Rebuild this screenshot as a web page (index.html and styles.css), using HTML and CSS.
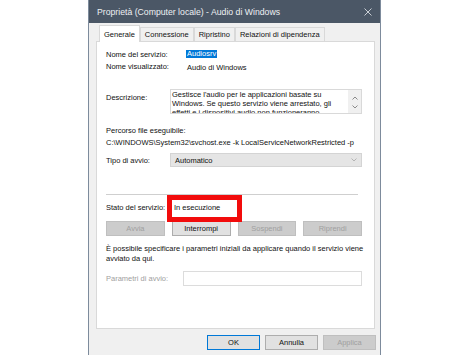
FILE: index.html
```html
<!DOCTYPE html>
<html lang="it">
<head>
    <meta charset="UTF-8">
    <meta name="viewport" content="width=device-width, initial-scale=1.0">
    <title>Proprietà - Audio di Windows</title>
    <link rel="stylesheet" href="styles.css">
</head>
<body>
    <div class="window">
        <div class="titlebar">
            <span class="title">Proprietà (Computer locale) - Audio di Windows</span>
            <svg class="close" width="8" height="8" viewBox="0 0 8 8">
                <path d="M0.5 0.5 L7.5 7.5 M7.5 0.5 L0.5 7.5" stroke="#c9ced4" stroke-width="1" fill="none"/>
            </svg>
        </div>

        <div class="client">
            <div class="tabs">
                <div class="tab active">Generale</div>
                <div class="tab">Connessione</div>
                <div class="tab">Ripristino</div>
                <div class="tab">Relazioni di dipendenza</div>
            </div>

            <div class="panel">
                <div class="row name-row">
                    <span class="label">Nome del servizio:</span>
                    <span class="selected-text">Audiosrv</span>
                </div>
                <div class="row name-row">
                    <span class="label">Nome visualizzato:</span>
                    <span class="display-name">Audio di Windows</span>
                </div>

                <div class="desc-row">
                    <span class="label desc-label">Descrizione:</span>
                    <div class="textarea">
                        <div class="textarea-text">Gestisce l'audio per le applicazioni basate su Windows. Se questo servizio viene arrestato, gli effetti e i dispositivi audio non funzioneranno correttamente.</div>
                        <div class="scrollbar">
                            <svg width="6" height="4" viewBox="0 0 6 4"><path d="M0.5 3.5 L3 1 L5.5 3.5" stroke="#8a8a8a" fill="none"/></svg>
                            <svg width="6" height="4" viewBox="0 0 6 4"><path d="M0.5 0.5 L3 3 L5.5 0.5" stroke="#8a8a8a" fill="none"/></svg>
                        </div>
                    </div>
                </div>

                <div class="row path-label">Percorso file eseguibile:</div>
                <div class="row">C:\WINDOWS\System32\svchost.exe -k LocalServiceNetworkRestricted -p</div>

                <div class="select-row">
                    <span class="label">Tipo di avvio:</span>
                    <div class="select">
                        <span>Automatico</span>
                        <svg width="6" height="4" viewBox="0 0 6 4"><path d="M0.5 0.5 L3 3 L5.5 0.5" stroke="#b4b4b4" fill="none"/></svg>
                    </div>
                </div>

                <div class="separator"></div>

                <div class="row status-row">
                    <span class="label">Stato del servizio:</span>
                    <span class="status">In esecuzione<span class="highlight-box"></span></span>
                </div>

                <div class="service-buttons">
                    <button class="btn disabled">Avvia</button>
                    <button class="btn">Interrompi</button>
                    <button class="btn disabled">Sospendi</button>
                    <button class="btn disabled">Riprendi</button>
                </div>

                <p class="info">È possibile specificare i parametri iniziali da applicare quando il servizio viene<br>avviato da qui.</p>

                <div class="params-row">
                    <span class="label muted">Parametri di avvio:</span>
                    <div class="input"></div>
                </div>
            </div>

            <div class="dialog-buttons">
                <button class="btn default">OK</button>
                <button class="btn">Annulla</button>
                <button class="btn disabled">Applica</button>
            </div>
        </div>
    </div>
</body>
</html>
```

FILE: styles.css
```css
* {
    margin: 0;
    padding: 0;
    box-sizing: border-box;
}

html, body {
    height: 100%;
    overflow: hidden;
}

body {
    font-family: 'Liberation Sans', Arial, sans-serif;
    font-size: 7.5px;
    color: #111;
    background: #fff;
}

.window {
    margin-left: 88px;
    width: 293px;
    height: 355px;
    overflow: hidden;
    border-left: 1px solid #7d8b9c;
    border-right: 1px solid #7d8b9c;
    background: #f0f0f0;
}

.titlebar {
    height: 23px;
    background: #4b5766;
    display: flex;
    align-items: center;
    justify-content: space-between;
    padding: 0 8px 0 8px;
}

.title {
    color: #eef0f3;
    font-size: 8.7px;
}

.close {
    display: block;
    margin-top: 1px;
}

.client {
    padding-top: 2px;
}

/* tabs */
.tabs {
    display: flex;
    align-items: flex-end;
    height: 16px;
    margin-left: 10px;
}

.tab {
    height: 14px;
    padding: 0 4px;
    display: flex;
    align-items: center;
    border: 1px solid #d9d9d9;
    border-bottom: none;
    background: #f0f0f0;
}

.tab.active {
    height: 17px;
    margin-bottom: -1px;
    background: #fff;
    position: relative;
    z-index: 1;
}

.panel {
    margin-left: 7px;
    width: 279px;
    height: 288px;
    background: #fff;
    border: 1px solid #d9d9d9;
    padding: 6px 12px 0 9px;
}

.row {
    height: 12px;
    display: flex;
    align-items: center;
    white-space: nowrap;
}

.name-row .label {
    width: 81px;
}

.selected-text {
    background: #0078d7;
    color: #fff;
    line-height: 8px;
    padding: 0 1px;
    margin-left: -1px;
}

.display-name {
    padding-top: 3px;
}

/* description */
.desc-row {
    display: flex;
    margin-top: 17px;
}

.desc-label {
    width: 64px;
    padding-top: 4px;
}

.textarea {
    width: 192px;
    height: 25px;
    border: 1px solid #d9d9d9;
    display: flex;
    overflow: hidden;
}

.textarea-text {
    flex: 1;
    line-height: 9px;
    padding: 0 2px 0 1px;
    margin-top: -0.5px;
}

.scrollbar {
    width: 13px;
    background: #f0f0f0;
    display: flex;
    flex-direction: column;
    align-items: center;
    justify-content: space-between;
    padding: 6px 0 4px;
}

.scrollbar svg {
    display: block;
}

.path-label {
    margin-top: 10px;
}

/* startup type */
.select-row {
    display: flex;
    align-items: center;
    margin-top: 5px;
}

.select-row .label {
    width: 64px;
}

.select {
    width: 192px;
    height: 14px;
    background: #e5e5e5;
    border: 1px solid #d4d4d4;
    display: flex;
    align-items: center;
    justify-content: space-between;
    padding: 0 4px 0 4px;
}

.separator {
    height: 1px;
    background: #cfcfcf;
    margin: 27px 4px 0 0;
}

/* status */
.status-row {
    margin-top: 6px;
}

.status-row .label {
    width: 68px;
}

.status {
    position: relative;
}

.highlight-box {
    position: absolute;
    left: -7px;
    top: -7.5px;
    width: 75px;
    height: 27px;
    border: 5px solid #f20c0c;
}

.service-buttons {
    display: grid;
    grid-template-columns: repeat(4, 1fr);
    gap: 7px;
    margin-top: 8px;
}

.btn {
    font-family: inherit;
    font-size: 7.5px;
    color: #111;
    height: 15px;
    background: #e1e1e1;
    border: 1px solid #adadad;
}

.btn.disabled {
    background: #cccccc;
    border-color: #bfbfbf;
    color: #a0a0a0;
}

.btn.default {
    border-color: #0078d7;
}

.info {
    margin-top: 8px;
    line-height: 9.5px;
    white-space: nowrap;
}

.params-row {
    display: flex;
    align-items: center;
    margin-top: 8px;
}

.params-row .label {
    width: 77px;
}

.muted {
    color: #a0a0a0;
}

.input {
    width: 179px;
    height: 15px;
    border: 1px solid #dcdcdc;
    background: #fff;
}

/* dialog buttons */
.dialog-buttons {
    display: flex;
    justify-content: flex-end;
    gap: 5px;
    margin-top: 6px;
    padding-right: 4px;
}

.dialog-buttons .btn {
    width: 53px;
}
```
